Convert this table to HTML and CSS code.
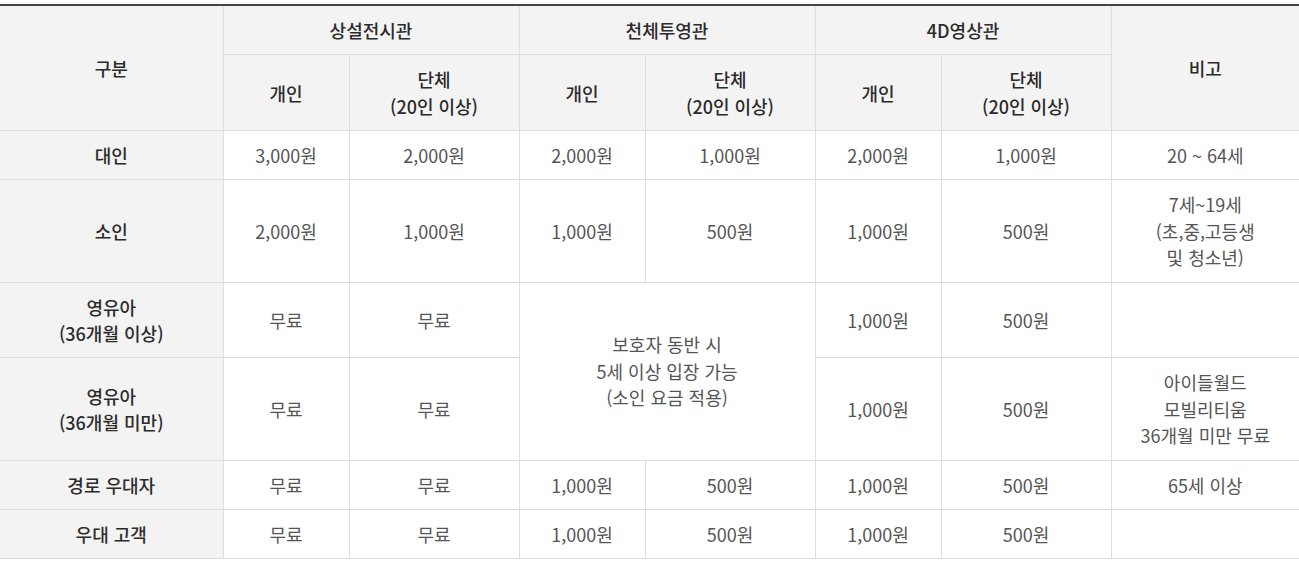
FILE: index.html
```html
<!DOCTYPE html>
<html lang="ko">
<head>
<meta charset="utf-8">
<link rel="stylesheet" href="styles.css">
</head>
<body>
<table class="fee">
  <colgroup>
    <col class="c-head">
    <col class="c-ind"><col class="c-grp">
    <col class="c-ind"><col class="c-grp">
    <col class="c-ind"><col class="c-grp">
    <col class="c-note">
  </colgroup>
  <thead>
    <tr>
      <th rowspan="2">구분</th>
      <th colspan="2">상설전시관</th>
      <th colspan="2">천체투영관</th>
      <th colspan="2">4D영상관</th>
      <th rowspan="2">비고</th>
    </tr>
    <tr>
      <th>개인</th><th>단체<br>(20인 이상)</th>
      <th>개인</th><th>단체<br>(20인 이상)</th>
      <th>개인</th><th>단체<br>(20인 이상)</th>
    </tr>
  </thead>
  <tbody>
    <tr>
      <th>대인</th>
      <td>3,000원</td><td>2,000원</td>
      <td>2,000원</td><td>1,000원</td>
      <td>2,000원</td><td>1,000원</td>
      <td>20 ~ 64세</td>
    </tr>
    <tr>
      <th>소인</th>
      <td>2,000원</td><td>1,000원</td>
      <td>1,000원</td><td>500원</td>
      <td>1,000원</td><td>500원</td>
      <td>7세~19세<br>(초,중,고등생<br>및 청소년)</td>
    </tr>
    <tr>
      <th>영유아<br>(36개월 이상)</th>
      <td>무료</td><td>무료</td>
      <td colspan="2" rowspan="2">보호자 동반 시<br>5세 이상 입장 가능<br>(소인 요금 적용)</td>
      <td>1,000원</td><td>500원</td>
      <td></td>
    </tr>
    <tr>
      <th>영유아<br>(36개월 미만)</th>
      <td>무료</td><td>무료</td>
      <td>1,000원</td><td>500원</td>
      <td>아이들월드<br>모빌리티움<br>36개월 미만 무료</td>
    </tr>
    <tr>
      <th>경로 우대자</th>
      <td>무료</td><td>무료</td>
      <td>1,000원</td><td>500원</td>
      <td>1,000원</td><td>500원</td>
      <td>65세 이상</td>
    </tr>
    <tr>
      <th>우대 고객</th>
      <td>무료</td><td>무료</td>
      <td>1,000원</td><td>500원</td>
      <td>1,000원</td><td>500원</td>
      <td></td>
    </tr>
  </tbody>
</table>
</body>
</html>
```

FILE: styles.css
```css
html, body {
  margin: 0;
  padding: 0;
  background: #ffffff;
}
body {
  padding-top: 4px;
  font-family: "Noto Sans CJK KR", "Noto Sans", sans-serif;
}
.fee {
  width: 1299px;
  border-collapse: collapse;
  table-layout: fixed;
  border-top: 2px solid #444444;
}
.c-head { width: 223px; }
.c-ind { width: 126px; }
.c-grp { width: 170px; }
.c-note { width: 188px; }
.fee th,
.fee td {
  border: 1px solid #dedede;
  padding: 11px 2px 10.75px;
  line-height: 26.5px;
  text-align: center;
  vertical-align: middle;
  font-size: 18px;
}
.fee tr > :first-child { border-left: none; }
.fee tr > :last-child { border-right: none; }
.fee th {
  background: #f3f3f3;
  color: #2b2b2b;
  font-weight: 500;
}
.fee td {
  background: #ffffff;
  color: #555555;
  font-weight: 400;
}
```
